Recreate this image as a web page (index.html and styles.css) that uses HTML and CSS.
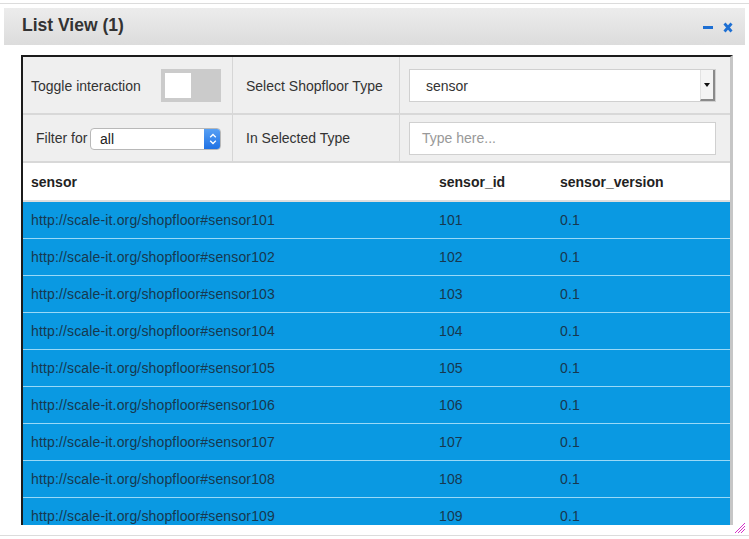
FILE: index.html
```html
<!DOCTYPE html>
<html>
<head>
<meta charset="utf-8">
<link rel="stylesheet" href="styles.css">
</head>
<body>
<div class="frame">
  <div class="header">
    <span class="title">List View (1)</span>
    <div class="tools">
      <svg class="ico" width="11" height="11" viewBox="0 0 11 11"><rect x="0" y="4" width="10" height="3" fill="#1d6fd3"/></svg>
      <svg class="ico" width="10" height="11" viewBox="0 0 10 11"><path d="M1.5 1.5 L8.5 9.5 M8.5 1.5 L1.5 9.5" stroke="#1d6fd3" stroke-width="2.8" stroke-linecap="butt"/></svg>
    </div>
  </div>
  <div class="panel">
    <div class="controls">
      <div class="cell c1 r1">
        <span>Toggle interaction</span>
        <div class="switch"><div class="knob"></div></div>
      </div>
      <div class="cell c2 r1"><span>Select Shopfloor Type</span></div>
      <div class="cell c3 r1">
        <div class="select">
          <span class="sel-text">sensor</span>
          <span class="sel-btn"><svg width="6" height="4" viewBox="0 0 6 4"><path d="M0 0 H6 L3 4 Z" fill="#111"/></svg></span>
        </div>
      </div>
      <div class="cell c1 r2">
        <span class="filter-label">Filter for</span>
        <div class="mac-select">
          <span class="mac-text">all</span>
          <span class="mac-arrows"><svg width="8" height="12" viewBox="0 0 8 12"><path d="M1.2 4.2 L4 1.5 L6.8 4.2 M1.2 7.8 L4 10.5 L6.8 7.8" fill="none" stroke="#fff" stroke-width="1.3"/></svg></span>
        </div>
      </div>
      <div class="cell c2 r2"><span>In Selected Type</span></div>
      <div class="cell c3 r2">
        <div class="input">Type here...</div>
      </div>
    </div>
    <div class="thead">
      <div class="col a">sensor</div>
      <div class="col b">sensor_id</div>
      <div class="col c">sensor_version</div>
    </div>
    <div class="tbody">
      <div class="row"><div class="col a">http://scale-it.org/shopfloor#sensor101</div><div class="col b">101</div><div class="col c">0.1</div></div>
      <div class="row"><div class="col a">http://scale-it.org/shopfloor#sensor102</div><div class="col b">102</div><div class="col c">0.1</div></div>
      <div class="row"><div class="col a">http://scale-it.org/shopfloor#sensor103</div><div class="col b">103</div><div class="col c">0.1</div></div>
      <div class="row"><div class="col a">http://scale-it.org/shopfloor#sensor104</div><div class="col b">104</div><div class="col c">0.1</div></div>
      <div class="row"><div class="col a">http://scale-it.org/shopfloor#sensor105</div><div class="col b">105</div><div class="col c">0.1</div></div>
      <div class="row"><div class="col a">http://scale-it.org/shopfloor#sensor106</div><div class="col b">106</div><div class="col c">0.1</div></div>
      <div class="row"><div class="col a">http://scale-it.org/shopfloor#sensor107</div><div class="col b">107</div><div class="col c">0.1</div></div>
      <div class="row"><div class="col a">http://scale-it.org/shopfloor#sensor108</div><div class="col b">108</div><div class="col c">0.1</div></div>
      <div class="row"><div class="col a">http://scale-it.org/shopfloor#sensor109</div><div class="col b">109</div><div class="col c">0.1</div></div>
    </div>
  </div>
  <svg class="resize" width="12" height="12" viewBox="0 0 12 12"><path d="M1 11 L11 1 M4 11 L11 4 M7 11 L11 7" stroke="#d633c8" stroke-width="1"/></svg>
</div>
</body>
</html>
```
FILE: styles.css
```css
html, body {
  margin: 0;
  padding: 0;
  background: #fff;
}
body {
  font-family: "Liberation Sans", Arial, sans-serif;
  color: #333;
}
.frame {
  position: relative;
  margin-top: 3px;
  height: 531px;
  border-top: 1px solid #dcdcdc;
  border-bottom: 1px solid #dcdcdc;
}
.header {
  margin: 4px 4px 0 4px;
  height: 37px;
  background: linear-gradient(#ececec, #dcdcdc);
  display: flex;
  align-items: center;
  justify-content: space-between;
  padding: 0 12px 0 18px;
}
.title {
  font-weight: bold;
  font-size: 17.5px;
  color: #333;
  margin-top: -2px;
}
.tools {
  display: flex;
  align-items: center;
  gap: 9px;
  margin-top: 2px;
}
.ico { display: block; }
.panel {
  margin: 10px 0 0 21px;
  width: 707px;
  height: 468px;
  border-top: 2px solid #1b1b1b;
  border-left: 2px solid #1b1b1b;
  border-right: 3px solid #c6c6c6;
  overflow: hidden;
  font-size: 14px;
}
.controls {
  display: grid;
  grid-template-columns: 210px 167px 1fr;
  grid-template-rows: 58px 48px;
  background: #efefef;
}
.cell {
  display: flex;
  align-items: center;
  border-bottom: 2px solid #d8d8d8;
  border-right: 1px solid #d6d6d6;
  color: #333;
}
.cell.c3 { border-right: 0; }
.c1 { padding: 0 11px 0 8px; justify-content: space-between; }
.c2 { padding-left: 13px; }
.c3 { padding-left: 9px; }
.r1 { padding-top: 1px; }
.switch {
  width: 60px;
  height: 33px;
  background: #cbcbcb;
  box-sizing: border-box;
  padding: 4px;
}
.knob {
  width: 26px;
  height: 25px;
  background: #fff;
}
.select {
  width: 307px;
  height: 33px;
  box-sizing: border-box;
  background: #fff;
  border: 1px solid #d0d0d0;
  display: flex;
  align-items: center;
  justify-content: space-between;
}
.sel-text { padding-left: 16px; }
.sel-btn {
  width: 15px;
  height: 31px;
  box-sizing: border-box;
  border-left: 1px solid #e2e2e2;
  border-right: 2px solid #8a8a8a;
  border-bottom: 2px solid #8a8a8a;
  background: #f4f4f4;
  display: flex;
  align-items: center;
  justify-content: center;
}
.filter-label { margin-left: 5px; }
.mac-select {
  width: 131px;
  height: 22px;
  box-sizing: border-box;
  background: #fff;
  border: 1px solid #b8b8b8;
  border-radius: 4px;
  display: flex;
  align-items: center;
  justify-content: space-between;
  overflow: hidden;
  margin-top: 1px;
}
.mac-text { padding-left: 9px; font-size: 14px; color: #222; }
.mac-arrows {
  width: 17px;
  height: 22px;
  background: linear-gradient(#5aa2f5, #1c6fe3);
  display: flex;
  align-items: center;
  justify-content: center;
  margin-right: -1px;
}
.input {
  width: 307px;
  height: 33px;
  box-sizing: border-box;
  background: #fff;
  border: 1px solid #d0d0d0;
  padding-left: 12px;
  display: flex;
  align-items: center;
  color: #999;
}
.thead {
  display: flex;
  height: 37px;
  align-items: center;
  background: #fff;
  font-weight: bold;
  color: #222;
  border-bottom: 2px solid #dedede;
}
.col.a { width: 400px; padding-left: 8px; }
.col.b { width: 113px; padding-left: 8px; }
.col.c { flex: 1; padding-left: 8px; }
.row {
  display: flex;
  height: 36px;
  align-items: center;
  background: #0a99e2;
  border-bottom: 1px solid #9ad9f7;
  color: #17384f;
  letter-spacing: 0.15px;
}
.resize {
  position: absolute;
  right: 3px;
  bottom: 1px;
}
```
